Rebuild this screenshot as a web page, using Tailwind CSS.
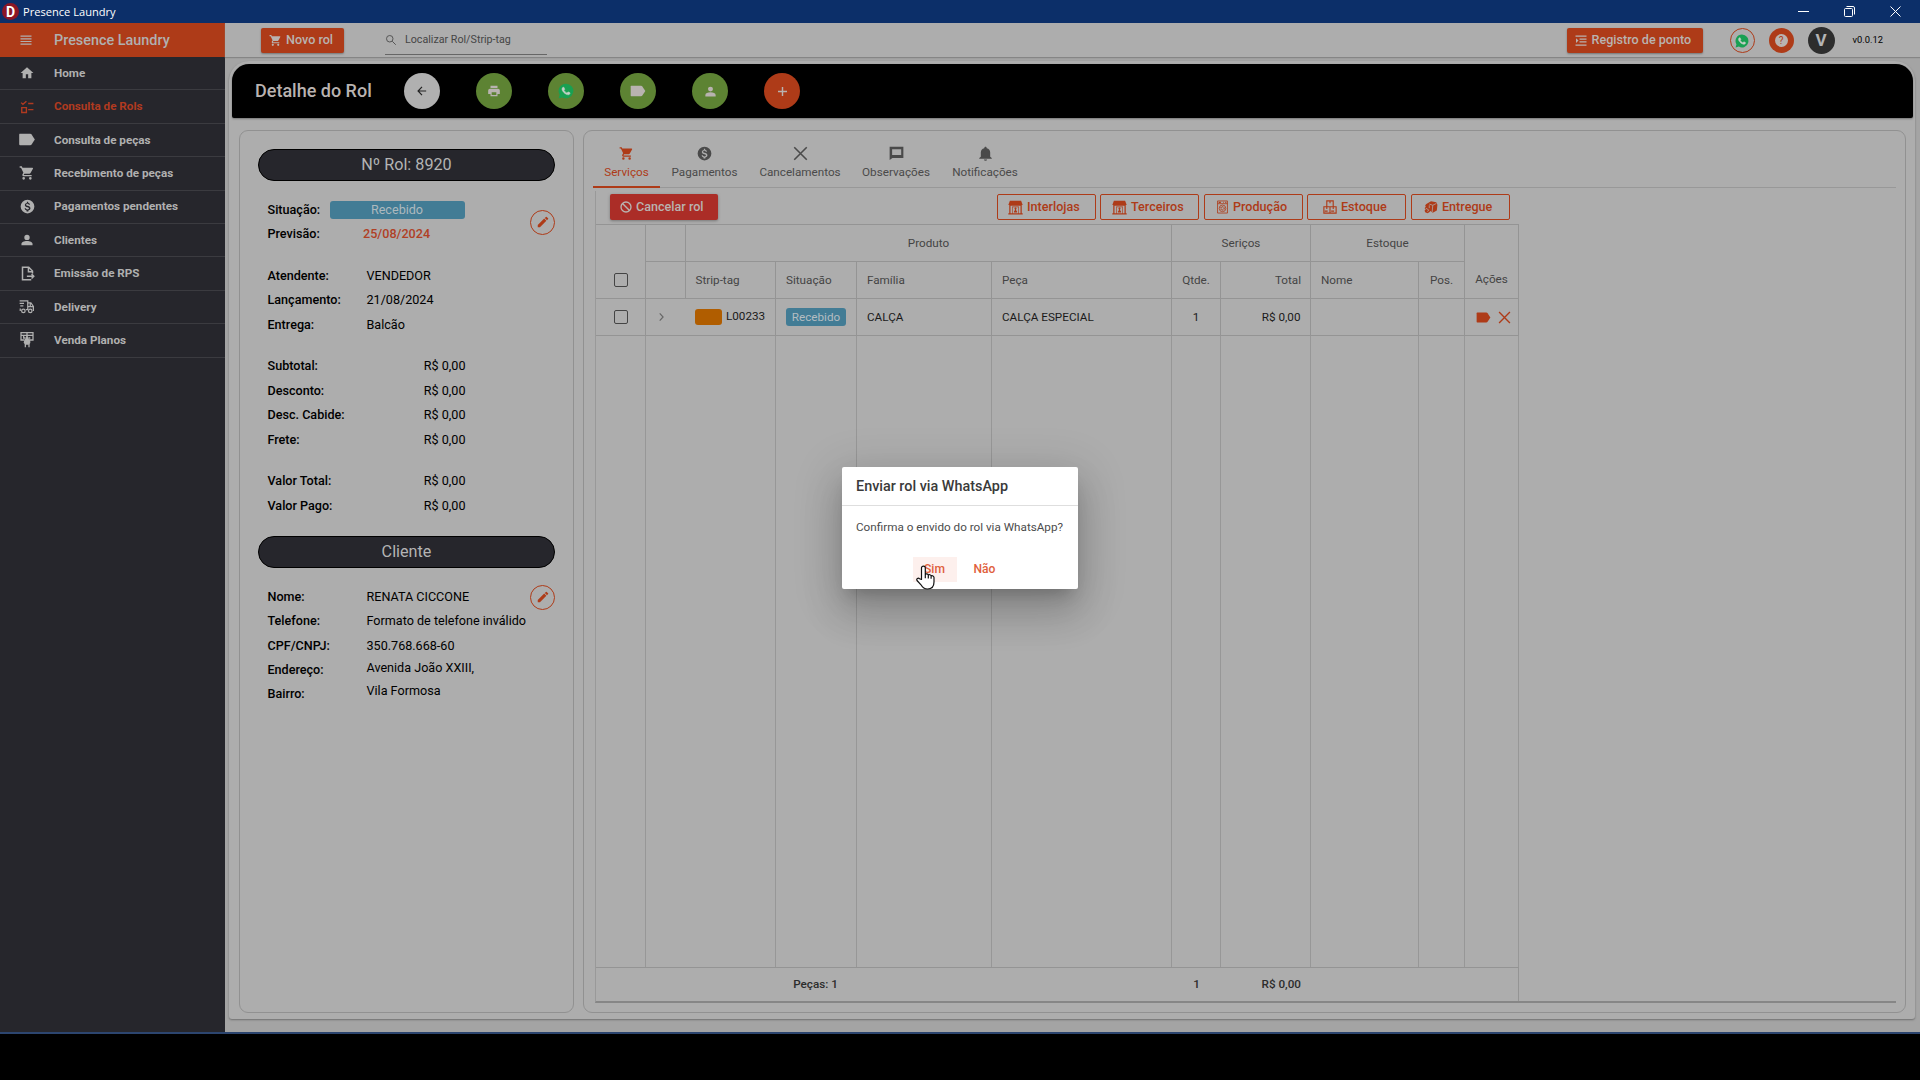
<!DOCTYPE html>
<html lang="pt-BR">

<head>
  <meta charset="UTF-8">
  <meta name="viewport" content="width=device-width, initial-scale=1.0">
  <title>Presence Laundry</title>
  <script src="https://cdn.jsdelivr.net/npm/@tailwindcss/browser@4"></script>
</head>

<body class="w-[1920px] h-[1080px] overflow-hidden bg-black font-['Roboto',sans-serif] text-[12.6px] text-black">

  <!-- icons -->
  <svg class="hidden">
    <symbol id="i-menu" viewBox="0 0 24 24"><path d="M1 3h22v2.400H1zM1 8.400h22v2.400H1zM1 13.800h22v2.400H1zM1 19.200h22v2.400H1z" /></symbol>
    <symbol id="i-home" viewBox="0 0 24 24"><path d="M10 21v-7h4v7h5.500v-9H23L12 2 1 12h3.500v9z" /></symbol>
    <symbol id="i-cart" viewBox="0 0 24 24"><path d="M17 18a2 2 0 1 1 0 4 2 2 0 0 1 0-4M1 2h3.270l.94 2H20a1 1 0 0 1 .88 1.500l-3.580 6.470a2 2 0 0 1-1.750 1.030H8.100l-.9 1.630a.25.25 0 0 0 .22.370H19v2H7a2 2 0 0 1-1.760-2.960l1.360-2.450L3 4H1zM7 18a2 2 0 1 1 0 4 2 2 0 0 1 0-4" /></symbol>
    <symbol id="i-tag" viewBox="0 0 24 24"><path d="M2 4h14.500c.9 0 1.500.4 2 1.100L23 12l-4.500 6.900c-.5.700-1.100 1.100-2 1.100H2c-.8 0-1-.6-1-1.200V5.200C1 4.600 1.200 4 2 4" /></symbol>
    <symbol id="i-money" viewBox="0 0 24 24"><path fill-rule="evenodd" d="M12 1a11 11 0 1 1 0 22 11 11 0 0 1 0-22m-1 3.500v1.700C9 6.600 7.700 7.900 7.700 9.600c0 2 1.700 3 4.100 3.600 2.100.5 2.500 1.200 2.500 2 0 .6-.4 1.500-2.300 1.500-1.700 0-2.400-.8-2.500-1.800H7.400c.1 1.900 1.500 3 3.100 3.300v1.700h2.900v-1.700c1.900-.3 3.300-1.400 3.300-3.300 0-2.600-2.300-3.500-4.400-4.100-2.100-.5-2.400-1.100-2.400-1.800 0-.8.700-1.400 2-1.400 1.400 0 1.900.7 1.900 1.600h2.100c-.1-1.600-1-2.800-2.900-3.200V4.500z" /></symbol>
    <symbol id="i-user" viewBox="0 0 24 24"><path d="M12 3a4.600 4.600 0 1 1 0 9.200A4.600 4.600 0 0 1 12 3m0 10.500c5 0 9.500 2 9.500 4.800V21h-19v-2.700c0-2.800 4.500-4.800 9.500-4.800" /></symbol>
    <symbol id="i-tasks" viewBox="0 0 24 24" fill="none" stroke="currentColor" stroke-width="2.400"><path d="M2 4.500l3 3L11 2M3 13h8v8.500H3zM14 6h9M14 16.500h9" /></symbol>
    <symbol id="i-doc" viewBox="0 0 24 24" fill="none" stroke="currentColor" stroke-width="2.400"><path d="M20 12V8l-6-6H4v20h14M13.500 2v7H20M11 16.500h11M18.500 13l3.500 3.500-3.500 3.500" /></symbol>
    <symbol id="i-truck" viewBox="0 0 24 24" fill="none" stroke="currentColor" stroke-width="2"><path d="M1 3h13v14h-3M1 7h7M2 11h5M2 15v3h1M14 6h5l4 6v6h-1M14 12h9M18 6v6" /><circle cx="7" cy="19" r="2.800" /><circle cx="18" cy="19" r="2.800" /></symbol>
    <symbol id="i-plan" viewBox="0 0 24 24" fill="none" stroke="currentColor" stroke-width="1.900"><path d="M8 12H3V1h18v11h-5M3 5h18M12 1v9M7 5v4h3M14 9h3" /><path fill="currentColor" d="M9 12l2-2 1-3 1 3 3 2v4l-2 2h-4l-2-2z" /><path d="M9.500 17v6M15 17v6" /></symbol>
    <symbol id="i-search" viewBox="0 0 24 24" fill="none" stroke="currentColor" stroke-width="2"><circle cx="9.500" cy="9.500" r="6.500" /><path d="M14.500 14.500l7 7" /></symbol>
    <symbol id="i-print" viewBox="0 0 24 24"><path fill-rule="evenodd" d="M18 3H6v4h12M19 8H5a3 3 0 0 0-3 3v6h4v4h12v-4h4v-6a3 3 0 0 0-3-3M16 19H8v-5h8z" /></symbol>
    <symbol id="i-phone" viewBox="0 0 24 24"><path d="M17.472 14.382c-.297-.149-1.758-.867-2.030-.967-.273-.099-.471-.148-.67.150-.197.297-.767.966-.94 1.164-.173.199-.347.223-.644.075-.297-.15-1.255-.463-2.390-1.475-.883-.788-1.480-1.761-1.653-2.059-.173-.297-.018-.458.130-.606.134-.133.298-.347.446-.52.149-.174.198-.298.298-.497.099-.198.050-.371-.025-.52-.075-.149-.669-1.612-.916-2.207-.242-.579-.487-.5-.669-.51-.173-.008-.371-.01-.57-.01-.198 0-.52.074-.792.372-.272.297-1.040 1.016-1.040 2.479 0 1.462 1.065 2.875 1.213 3.074.149.198 2.096 3.200 5.077 4.487.709.306 1.262.489 1.694.625.712.227 1.360.195 1.871.118.571-.085 1.758-.719 2.006-1.413.248-.694.248-1.289.173-1.413-.074-.124-.272-.198-.57-.347" /></symbol>
    <symbol id="i-whats" viewBox="0 0 24 24"><path fill="#19a052" d="M12 1a11 11 0 1 1-5.400 20.600L1 23l1.500-5.400A11 11 0 0 1 12 1" /><use href="#i-phone" fill="#c4cfc6" stroke="#c4cfc6" stroke-width=".8" /></symbol>
    <symbol id="i-pencil" viewBox="0 0 24 24"><path d="M20.710 7.040a1 1 0 0 0 0-1.410l-2.340-2.340a1 1 0 0 0-1.410 0l-1.840 1.830 3.750 3.750M3 17.250V21h3.750L17.810 9.930l-3.750-3.750z" /></symbol>
    <symbol id="i-x" viewBox="0 0 24 24" fill="none" stroke="currentColor" stroke-width="2.500"><path d="M2 2l20 20M22 2L2 22" /></symbol>
    <symbol id="i-msg" viewBox="0 0 24 24"><path fill-rule="evenodd" d="M2 1h21v18H5.500L1 22.500V1zM5 5v9.500h14.500V5z" /></symbol>
    <symbol id="i-bell" viewBox="0 0 24 24"><path d="M22 19v1.500H2V19l2.500-2v-6.500c0-3.200 2-6 5.500-6.800C10 2 10.800 1 12 1s2 1 2 2.700c3.500.8 5.500 3.600 5.500 6.800V17zM14.500 21.500a2.500 2 0 0 1-5 0" /></symbol>
    <symbol id="i-ban" viewBox="0 0 24 24" fill="none" stroke="currentColor" stroke-width="2.700"><circle cx="12" cy="12" r="10" /><path d="M5 5l14 14" /></symbol>
    <symbol id="i-indent" viewBox="0 0 24 24"><path d="M1 1h22v2.500H1zM9 7h14v2.500H9zM9 12.700h14v2.500H9zM1 19h22v2.500H1zM2 6.500l5 4.700-5 4.700z" /></symbol>
    <symbol id="i-store" viewBox="0 0 24 24"><path fill-rule="evenodd" d="M3 1h18l2.500 7H22v13h1.500v2H.5v-2H2V8H.5zM4 9v12h2.500V10.500h11V21H20V9zM7.500 11.500V21h9v-9.500z" /><path d="M10 13l2-1.500 2 1.500-1 1.500v2l1.500 2V20h-5v-1.500l1.500-2v-2z" /></symbol>
    <symbol id="i-washer" viewBox="0 0 20 24" fill="none" stroke="currentColor"><path stroke-width="1.500" d="M1 1h18v22H1zM1 6h18" /><path stroke-width="2" d="M3 3.500h4M11 3.500h1M15 3.500h2" /><circle cx="10" cy="14.500" r="6" stroke-width="1.400" /><circle cx="10" cy="14.500" r="3" stroke-width="2" stroke-dasharray="2 1" /></symbol>
    <symbol id="i-boxes" viewBox="0 0 24 24" fill="none" stroke="currentColor" stroke-width="1.900"><path d="M6.500 1.500h11v10h-11zM1.500 11.500h10.500v11H1.500zM12 11.500h10.500v11H12zM12 1.500v4M6.500 11.500v4M17.500 11.500v4M3 19h5M14 19h5" /></symbol>
    <symbol id="i-deliver" viewBox="0 0 24 24"><path d="M4 7l8-5 9 2 2 4-1 10-7 4-4-3-2 2-3 1.500-4-1.500-1-3 2-2-2-2 2-3-1-2z" /><path fill="none" stroke="#adadad" stroke-width="1.300" d="M9 7l6 2 6-3M15 9l-1 12M3 14l5 3-2 3M9 9v5" /></symbol>
  </svg>

  <!-- window title bar -->
  <div class="flex h-[23px] items-center justify-between bg-[#0c2f69] text-white">
    <div class="flex items-center">
      <div class="ml-[2px] flex size-[17px] items-center justify-center rounded-full bg-[#8b1626] font-['Roboto'] text-[14px] leading-none font-bold">D</div>
      <span class="ml-[4px] font-['Open_Sans'] text-[11.1px] leading-[23px]">Presence Laundry</span>
    </div>
    <div class="mr-[19px] flex items-center gap-[35px] pb-[1px]">
      <svg class="size-[11px]" viewBox="0 0 11 11" stroke="#fff" fill="none"><path d="M0 5.500h11" /></svg>
      <svg class="size-[11px]" viewBox="0 0 11 11" stroke="#fff" fill="none"><rect x=".5" y="2.500" width="8" height="8" rx="1" /><path d="M2.500.5H9a1.500 1.500 0 0 1 1.500 1.500v6.500" /></svg>
      <svg class="size-[11px]" viewBox="0 0 11 11" stroke="#fff" fill="none"><path d="M.5.5l10 10M10.500.5l-10 10" /></svg>
    </div>
  </div>

  <div class="flex h-[1009px]">
    <!-- sidebar -->
    <nav class="w-[225px] shrink-0 bg-[#26262c] text-[11.7px] font-bold text-[#b0b0b0]">
      <div class="flex h-[34px] items-center bg-[#ae3b18] pl-[20px] text-[14.4px] font-medium">
        <svg class="size-[12px] fill-current"><use href="#i-menu" /></svg>
        <span class="ml-[22px] pt-px">Presence Laundry</span>
      </div>
      <a class="flex h-[33.4px] items-center border-b border-[#3b3b40] pl-[20px]"><svg class="size-[14px] fill-current"><use href="#i-home" /></svg><span class="ml-[20px] pt-px">Home</span></a>
      <a class="flex h-[33.4px] items-center border-b border-[#3b3b40] pl-[20px] text-[#b03a20]"><svg class="size-[14px]"><use href="#i-tasks" /></svg><span class="ml-[20px] pt-px">Consulta de Rols</span></a>
      <a class="flex h-[33.4px] items-center border-b border-[#3b3b40] pl-[18px]"><svg class="h-[17px] w-[18px] fill-current"><use href="#i-tag" /></svg><span class="ml-[18px] pt-px">Consulta de peças</span></a>
      <a class="flex h-[33.4px] items-center border-b border-[#3b3b40] pl-[19px]"><svg class="size-[16px] fill-current"><use href="#i-cart" /></svg><span class="ml-[19px] pt-px">Recebimento de peças</span></a>
      <a class="flex h-[33.4px] items-center border-b border-[#3b3b40] pl-[20px]"><svg class="size-[15px] fill-current"><use href="#i-money" /></svg><span class="ml-[19px] pt-px">Pagamentos pendentes</span></a>
      <a class="flex h-[33.4px] items-center border-b border-[#3b3b40] pl-[20px]"><svg class="size-[14px] fill-current"><use href="#i-user" /></svg><span class="ml-[20px] pt-px">Clientes</span></a>
      <a class="flex h-[33.4px] items-center border-b border-[#3b3b40] pl-[20px]"><svg class="size-[15px]"><use href="#i-doc" /></svg><span class="ml-[19px] pt-px">Emissão de RPS</span></a>
      <a class="flex h-[33.4px] items-center border-b border-[#3b3b40] pl-[19px]"><svg class="size-[15px]"><use href="#i-truck" /></svg><span class="ml-[20px] pt-px">Delivery</span></a>
      <a class="flex h-[33.4px] items-center border-b border-[#3b3b40] pl-[19px]"><svg class="size-[16px]"><use href="#i-plan" /></svg><span class="ml-[19px] pt-px">Venda Planos</span></a>
    </nav>

    <div class="flex grow flex-col bg-[#a4a4a4]">
      <!-- toolbar -->
      <header class="flex h-[34px] shrink-0 items-center bg-[#adadad] pl-[36px] shadow-[0_1px_1px_#858585]">
        <button class="mt-[1px] flex h-[25px] w-[83px] items-center rounded-[2px] bg-[#ae3b18] pl-[8px] font-medium text-[#b9b3b0] shadow-[0_1px_2px_#777]">
          <svg class="mr-[4px] size-[13px] fill-current"><use href="#i-cart" /></svg>Novo rol
        </button>
        <div class="mt-[1px] ml-[41px] flex h-[29px] w-[162px] items-center border-b border-[#666] text-[10.7px] text-[#454545]">
          <svg class="mr-[8px] size-[12px] text-[#555]"><use href="#i-search" /></svg>Localizar Rol/Strip-tag
        </div>
        <button class="mt-[1px] mr-[27px] ml-auto flex h-[25px] w-[136px] items-center rounded-[2px] bg-[#ae3b18] pl-[8px] font-medium text-[#b9b3b0] shadow-[0_1px_2px_#777]">
          <svg class="mr-[5px] size-[12px] fill-current"><use href="#i-indent" /></svg>Registro de ponto
        </button>
        <div class="mt-[1px] mr-[14px] flex size-[25px] items-center justify-center rounded-full border border-[#ae3b18]"><svg class="size-[14px]"><use href="#i-whats" /></svg></div>
        <div class="mt-[1px] mr-[14px] flex size-[25px] items-center justify-center rounded-full bg-[#ae3b18]">
          <span class="flex size-[13px] items-center justify-center rounded-full bg-[#b9b3b0] text-[10px] leading-none text-[#ae3b18]">?</span>
        </div>
        <div class="mt-[1px] flex size-[27px] items-center justify-center rounded-full bg-[#2d2d2d] text-[17px] leading-none font-bold text-[#b4b4b4]">V</div>
        <span class="mr-[37px] ml-[18px] text-[9.36px]">v0.0.12</span>
      </header>

      <main class="mt-[4px] mr-[5px] ml-[4px] h-[958px] rounded-tl-[20px] rounded-tr-[20px] rounded-b-[3px] bg-[#adadad] pt-[3px] pl-[3px] shadow-[0_1px_2px_#6e6e6e]">
        <!-- page header -->
        <div class="flex h-[54px] w-[1681px] items-center rounded-t-[17px] rounded-b-[2px] bg-black pl-[23px] text-[#b9b3b0] shadow-[0_1px_2px_#777]">
          <h1 class="w-[149px] text-[18px] leading-none font-medium">Detalhe do Rol</h1>
          <div class="flex gap-[36px]">
            <div class="flex size-[36px] items-center justify-center rounded-full bg-[#b0b0b0] text-[#222]"><svg class="size-[10px]" viewBox="0 0 24 24" fill="none" stroke="currentColor" stroke-width="2.800"><path d="M22 12H3M12 2L2.500 12l9.500 10" /></svg></div>
            <div class="flex size-[36px] items-center justify-center rounded-full bg-[#5d8333]"><svg class="size-[14px] fill-current"><use href="#i-print" /></svg></div>
            <div class="flex size-[36px] items-center justify-center rounded-full bg-[#5d8333]"><svg class="size-[16px]"><use href="#i-whats" /></svg></div>
            <div class="flex size-[36px] items-center justify-center rounded-full bg-[#5d8333]"><svg class="size-[16px] fill-current"><use href="#i-tag" /></svg></div>
            <div class="flex size-[36px] items-center justify-center rounded-full bg-[#5d8333]"><svg class="size-[13px] fill-current"><use href="#i-user" /></svg></div>
            <div class="flex size-[36px] items-center justify-center rounded-full bg-[#ae3b18]"><svg class="size-[9px]" viewBox="0 0 10 10" stroke="currentColor" stroke-width="1.600"><path d="M5 0v10M0 5h10" /></svg></div>
          </div>
        </div>

        <div class="mt-[12px] ml-[7px] flex gap-[9px]">
          <!-- order details -->
          <section class="h-[883px] w-[335px] rounded-[9px] border border-[#919191] pt-[18px] pr-[18px] pl-[18px]">
            <h2 class="flex h-[32px] items-center justify-center rounded-full border border-black bg-[#26262c] text-[16.2px] text-[#b4b4b4]">Nº Rol: 8920</h2>

            <div class="mt-[17px] flex items-center justify-between pl-[9.5px]">
              <div>
                <div class="flex h-[24.4px] items-center"><b class="w-[62px] font-medium">Situação:</b><span class="h-[18px] w-[135px] rounded-[3px] bg-[#427c95] text-center leading-[18px] text-[#adb9be]">Recebido</span></div>
                <div class="flex h-[24.4px] items-center"><b class="w-[95.5px] font-medium">Previsão:</b><span class="font-medium text-[#b04025]">25/08/2024</span></div>
              </div>
              <button class="flex size-[25px] items-center justify-center rounded-full border border-[#ae3b18] text-[#ae3b18]"><svg class="size-[14px] fill-current"><use href="#i-pencil" /></svg></button>
            </div>

            <div class="mt-[17.4px] pl-[9.5px]">
              <div class="flex h-[24.4px] items-center"><b class="w-[99px] font-medium">Atendente:</b>VENDEDOR</div>
              <div class="flex h-[24.4px] items-center"><b class="w-[99px] font-medium">Lançamento:</b>21/08/2024</div>
              <div class="flex h-[24.4px] items-center"><b class="w-[99px] font-medium">Entrega:</b>Balcão</div>
            </div>

            <div class="mt-[17.4px] w-[207.500px] pl-[9.5px]">
              <div class="flex h-[24.4px] items-center justify-between"><b class="font-medium">Subtotal:</b>R$ 0,00</div>
              <div class="flex h-[24.4px] items-center justify-between"><b class="font-medium">Desconto:</b>R$ 0,00</div>
              <div class="flex h-[24.4px] items-center justify-between"><b class="font-medium">Desc. Cabide:</b>R$ 0,00</div>
              <div class="flex h-[24.4px] items-center justify-between"><b class="font-medium">Frete:</b>R$ 0,00</div>
            </div>

            <div class="mt-[17.4px] w-[207.500px] pl-[9.5px]">
              <div class="flex h-[24.4px] items-center justify-between"><b class="font-medium">Valor Total:</b>R$ 0,00</div>
              <div class="flex h-[24.4px] items-center justify-between"><b class="font-medium">Valor Pago:</b>R$ 0,00</div>
            </div>

            <h2 class="mt-[17.5px] flex h-[32px] items-center justify-center rounded-full border border-black bg-[#26262c] text-[16.2px] text-[#b4b4b4]">Cliente</h2>

            <div class="mt-[17px] flex items-start justify-between pl-[9.5px]">
              <div>
                <div class="flex h-[24.4px] items-center"><b class="w-[99px] font-medium">Nome:</b>RENATA CICCONE</div>
                <div class="flex h-[24.4px] items-center"><b class="w-[99px] font-medium">Telefone:</b>Formato de telefone inválido</div>
                <div class="flex h-[24.4px] items-center"><b class="w-[99px] font-medium">CPF/CNPJ:</b>350.768.668-60</div>
                <div class="flex h-[24.4px] items-center"><b class="w-[99px] font-medium">Endereço:</b><span class="pb-[4px]">Avenida João XXIII,</span></div>
                <div class="flex h-[24.4px] items-center"><b class="w-[99px] font-medium">Bairro:</b><span class="pb-[6px]">Vila Formosa</span></div>
              </div>
              <button class="flex size-[25px] items-center justify-center rounded-full border border-[#ae3b18] text-[#ae3b18]"><svg class="size-[14px] fill-current"><use href="#i-pencil" /></svg></button>
            </div>
          </section>

          <!-- services -->
          <section class="h-[883px] w-[1323px] rounded-[9px] border border-[#919191] pt-[3px] pl-[9px] text-[11.7px]">
            <div class="flex h-[54px] w-[1303px] border-b border-[#989898] text-[#4a4a4a]">
              <div class="flex h-[54px] w-[67px] flex-col items-center border-b-2 border-[#ae3b18] pt-[12px] text-[#ae3b18]"><svg class="size-[15px] fill-current"><use href="#i-cart" /></svg><span class="mt-[3px] leading-[16px]">Serviços</span></div>
              <div class="flex w-[89px] flex-col items-center pt-[12px]"><svg class="size-[15px] fill-current"><use href="#i-money" /></svg><span class="mt-[3px] leading-[16px]">Pagamentos</span></div>
              <div class="flex w-[102px] flex-col items-center pt-[12px]"><svg class="size-[15px]"><use href="#i-x" /></svg><span class="mt-[3px] leading-[16px]">Cancelamentos</span></div>
              <div class="flex w-[90px] flex-col items-center pt-[12px]"><svg class="size-[15px] fill-current"><use href="#i-msg" /></svg><span class="mt-[3px] leading-[16px]">Observações</span></div>
              <div class="flex w-[88px] flex-col items-center pt-[12px]"><svg class="size-[15px] fill-current"><use href="#i-bell" /></svg><span class="mt-[3px] leading-[16px]">Notificações</span></div>
            </div>

            <div class="mt-[3px] ml-[2px] flex h-[812px] w-[1301px] flex-col border-b-2 border-l border-b-[#868686] border-l-[#999]">
              <div class="flex h-[33px] items-start pt-[3px] pl-[14px] text-[12.6px] font-medium text-[#ae3b18]">
                <button class="flex h-[26px] w-[108px] items-center rounded-[2px] bg-[#ab2d27] pl-[10px] text-[#b9b3b0] shadow-[0_1px_3px_#777]"><svg class="mr-[4px] size-[12px]"><use href="#i-ban" /></svg>Cancelar rol</button>
                <button class="ml-[279px] flex h-[26px] w-[99px] items-center rounded-[2px] border border-[#ae3b18] pl-[10px]"><svg class="mr-[4px] size-[15px] fill-current"><use href="#i-store" /></svg>Interlojas</button>
                <button class="ml-[4px] flex h-[26px] w-[99px] items-center rounded-[2px] border border-[#ae3b18] pl-[11px]"><svg class="mr-[4px] size-[15px] fill-current"><use href="#i-store" /></svg>Terceiros</button>
                <button class="ml-[5px] flex h-[26px] w-[99px] items-center rounded-[2px] border border-[#ae3b18] pl-[12px]"><svg class="mr-[5px] h-[14px] w-[11px]"><use href="#i-washer" /></svg>Produção</button>
                <button class="ml-[4px] flex h-[26px] w-[99px] items-center rounded-[2px] border border-[#ae3b18] pl-[15px]"><svg class="mr-[4px] size-[14px]"><use href="#i-boxes" /></svg>Estoque</button>
                <button class="ml-[5px] flex h-[26px] w-[99px] items-center rounded-[2px] border border-[#ae3b18] pl-[12px]"><svg class="mr-[4px] size-[14px] fill-current"><use href="#i-deliver" /></svg>Entregue</button>
              </div>

              <div class="flex w-[923px] grow flex-col border-t border-[#949494]">
                <div class="grid grid-cols-[50px_40px_90px_81px_135px_180px_49px_90px_108px_46px_54px] grid-rows-[37px_37px] text-[#444]">
                  <div class="row-span-2 flex items-end border-r border-b border-[#949494] pb-[11px] pl-[18px]"><span class="size-[14px] rounded-[2px] border border-[#444]"></span></div>
                  <div class="border-r border-b border-[#949494]"></div>
                  <div class="col-span-4 flex items-center justify-center border-r border-b border-[#949494] pt-px">Produto</div>
                  <div class="col-span-2 flex items-center justify-center border-r border-b border-[#949494] pt-px">Seriços</div>
                  <div class="col-span-2 flex items-center justify-center border-r border-b border-[#949494] pt-px">Estoque</div>
                  <div class="row-span-2 flex items-end justify-center border-r border-b border-[#949494] pb-[9px]">Ações</div>
                  <div class="border-r border-b border-[#949494]"></div>
                  <div class="flex items-center border-r border-b border-[#949494] pt-px pl-[9.5px]">Strip-tag</div>
                  <div class="flex items-center border-r border-b border-[#949494] pt-px pl-[10px]">Situação</div>
                  <div class="flex items-center border-r border-b border-[#949494] pt-px pl-[10px]">Família</div>
                  <div class="flex items-center border-r border-b border-[#949494] pt-px pl-[10px]">Peça</div>
                  <div class="flex items-center justify-center border-r border-b border-[#949494] pt-px">Qtde.</div>
                  <div class="flex items-center justify-end border-r border-b border-[#949494] pt-px pr-[9px]">Total</div>
                  <div class="flex items-center border-r border-b border-[#949494] pt-px pl-[10px]">Nome</div>
                  <div class="flex items-center justify-center border-r border-b border-[#949494] pt-px">Pos.</div>
                </div>

                <div class="grid h-[37px] grid-cols-[50px_130px_81px_135px_180px_49px_90px_108px_46px_54px] text-[#1a1a1a]">
                  <div class="flex items-center border-r border-b border-[#949494] pl-[18px]"><span class="size-[14px] rounded-[2px] border border-[#444]"></span></div>
                  <div class="flex items-center border-r border-b border-[#949494] pl-[13px]">
                    <svg class="mr-[31px] h-[8px] w-[5px]" viewBox="0 0 5 9" fill="none" stroke="#666" stroke-width="1.300"><path d="M.5.5l3.800 4-3.800 4" /></svg>
                    <span class="mr-[4px] h-[16px] w-[27px] rounded-[3px] bg-[#b05d00]"></span><span class="pb-[1px]">L00233</span>
                  </div>
                  <div class="flex items-center border-r border-b border-[#949494] pl-[10px]"><span class="h-[18px] w-[60px] rounded-[3px] bg-[#427c95] text-center leading-[18px] text-[#b4bdc1]">Recebido</span></div>
                  <div class="flex items-center border-r border-b border-[#949494] pt-px pl-[10px]">CALÇA</div>
                  <div class="flex items-center border-r border-b border-[#949494] pt-px pl-[10px]">CALÇA ESPECIAL</div>
                  <div class="flex items-center justify-center border-r border-b border-[#949494] pt-px">1</div>
                  <div class="flex items-center justify-end border-r border-b border-[#949494] pt-px pr-[9.5px]">R$ 0,00</div>
                  <div class="border-r border-b border-[#949494]"></div>
                  <div class="border-r border-b border-[#949494]"></div>
                  <div class="flex items-center border-r border-b border-[#949494] pl-[11px] text-[#ae3b18]"><svg class="mr-[7px] size-[15px] fill-current"><use href="#i-tag" /></svg><svg class="size-[13px]"><use href="#i-x" /></svg></div>
                </div>

                <div class="grid grow grid-cols-[50px_130px_81px_135px_180px_49px_90px_108px_46px_54px]">
                  <div class="border-r border-[#979797]"></div>
                  <div class="border-r border-[#979797]"></div>
                  <div class="border-r border-[#979797]"></div>
                  <div class="border-r border-[#979797]"></div>
                  <div class="border-r border-[#979797]"></div>
                  <div class="border-r border-[#979797]"></div>
                  <div class="border-r border-[#979797]"></div>
                  <div class="border-r border-[#979797]"></div>
                  <div class="border-r border-[#979797]"></div>
                  <div class="border-r border-[#979797]"></div>
                </div>

                <div class="grid h-[34px] grid-cols-[180px_81px_315px_49px_90px_108px] items-center border-t border-r border-[#949494] font-medium text-[#2c2c2c]">
                  <span></span>
                  <span class="pr-[2px] text-center">Peças: 1</span>
                  <span></span>
                  <span class="text-center">1</span>
                  <span class="pr-[10px] text-right">R$ 0,00</span>
                </div>
              </div>
            </div>
          </section>
        </div>
      </main>
    </div>
  </div>
  <div class="h-[2px] bg-[#2c456f]"></div>

  <!-- confirm dialog -->
  <div class="absolute top-[467px] left-[841.5px] h-[122px] w-[236px] rounded-[2px] bg-white shadow-[0_11px_15px_-7px_rgba(0,0,0,0.2),0_24px_38px_3px_rgba(0,0,0,0.14),0_9px_46px_8px_rgba(0,0,0,0.12)]">
    <div class="h-[39px] border-b border-[#dedede] pl-[14.5px] text-[14.4px] leading-[39px] font-medium text-[#3a3a3a]">Enviar rol via WhatsApp</div>
    <div class="pl-[14.5px] text-[11.7px] leading-[42px] text-[#4c4c4c]">Confirma o envido do rol via WhatsApp?</div>
    <div class="mt-[9px] flex gap-[6px] pl-[71px] text-[12.1px] font-medium text-[#e0603c]">
      <button class="h-[25px] w-[44px] bg-[#fdf0ed]">Sim</button>
      <button class="h-[25px] w-[44px]">Não</button>
    </div>
  </div>

  <!-- hand cursor -->
  <svg class="absolute top-[565px] left-[916px] h-[25px] w-[19px]" viewBox="0 0 19 25" fill="#fff" stroke="#111" stroke-width="1.200" stroke-linejoin="round">
    <path d="M5.500 14.500V3a1.900 1.900 0 0 1 3.800 0v6.500c.3-1.100 2.800-.9 3 .6.800-.9 2.700-.4 2.800.9 1.200-.7 2.900.1 2.900 1.600V17c0 4-2.200 7-6.500 7-3.800 0-5-1.500-6.500-4.200L1 15.500c-.9-1.600 1.200-3 2.500-1.700zM9.300 9.500v3.800M12.300 10.500v3M15.100 11.500v2.300" />
  </svg>

</body>

</html>
